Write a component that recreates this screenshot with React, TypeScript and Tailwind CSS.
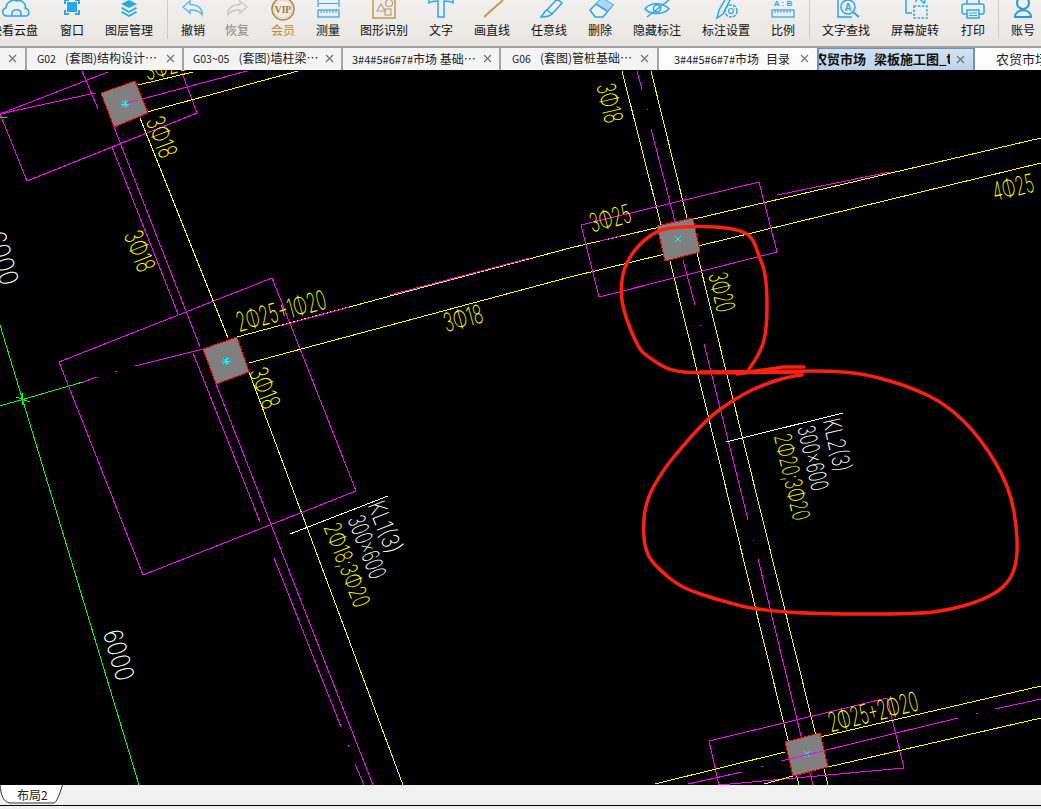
import type { ReactNode } from "react";

const BLUE = "#2aa6ea";
const GOLD = "#c39a52";

function Tool({ w, label, color, children }: { w: string; label: string; color?: string; children: ReactNode }) {
    return (
        <div className={`${w} shrink-0 flex flex-col items-center`}>
            <svg width="30" height="20" viewBox="0 0 30 20" className="overflow-visible shrink-0" fill="none" stroke={BLUE} strokeWidth="1.5">
                {children}
            </svg>
            <span className={`mt-[2px] text-[12px] leading-4 whitespace-nowrap ${color ?? "text-[#111]"}`}>{label}</span>
        </div>
    );
}

function Divider({ className }: { className?: string }) {
    return <div className={`w-px h-[39px] shrink-0 bg-[#cfccc8] ${className ?? ""}`} />;
}

function Toolbar() {
    return (
        <div className="h-[46px] shrink-0 flex overflow-hidden bg-gradient-to-b from-[#f1f0ee] to-[#e9e6e2]">
            <div className="flex ml-[-14px]">
                <Tool w="w-[56px]" label="快看云盘">
                    <path d="M8 16 C3 16 2 9 7 8 C7 2 14 -1 18 1 C22 -1 28 4 26 8 C31 9 31 16 26 16 Z" />
                    <path d="M13 16 V13 a4 3 0 0 1 9 0 V16" />
                </Tool>
                <Tool w="w-[60px]" label="窗口">
                    <rect x="10" y="2" width="10" height="10" fill={BLUE} stroke="none" />
                    <path d="M8 4 V0 H12 M18 0 H22 V4 M22 10 V14 H18 M12 14 H8 V10" strokeWidth="2" />
                </Tool>
                <Tool w="w-[54px]" label="图层管理">
                    <path d="M15 0 L23 4 L15 8 L7 4 Z" fill={BLUE} stroke="none" />
                    <path d="M8 7 L15 11 L22 7 L23 8.5 L15 13 L7 8.5 Z" fill={BLUE} stroke="none" />
                    <path d="M8 11 L15 15 L22 11 L23 12.5 L15 17 L7 12.5 Z" fill={BLUE} stroke="none" />
                </Tool>
                <Divider className="ml-[11px]" />
                <Tool w="w-[50px]" label="撤销">
                    <path d="M5 7 L12 1 V4.5 C19 4.5 25 8 24 15 C22 11 18 10 12 10 V13 Z" stroke="#62b9ea" />
                </Tool>
                <Tool w="w-[38px]" label="恢复" color="text-[#8a8a8a]">
                    <path d="M25 7 L18 1 V4.5 C11 4.5 5 8 6 15 C8 11 12 10 18 10 V13 Z" stroke="#c9c9c9" />
                </Tool>
                <Tool w="w-[54px]" label="会员" color="text-[#b98a3c]">
                    <circle cx="15" cy="9" r="11" stroke="#b5873e" />
                    <circle cx="15" cy="9" r="9" stroke="#e3cfa5" strokeWidth="1" />
                    <text x="15" y="12.5" textAnchor="middle" fontSize="9.5" fontWeight="700" fontFamily="Liberation Serif, serif" fill="#a9782d" stroke="none">
                        VIP
                    </text>
                </Tool>
                <Tool w="w-[36px]" label="测量">
                    <path d="M5 0 V7 M26 0 V7 M6 3.5 H25" strokeWidth="1.2" />
                    <rect x="5" y="10" width="21" height="7" strokeWidth="1.2" />
                    <path d="M8 10 V13 M11 10 V13 M14 10 V13 M17 10 V13 M20 10 V13 M23 10 V13" strokeWidth="1" />
                </Tool>
                <Tool w="w-[76px]" label="图形识别">
                    <path d="M4 -3 V18 H26 V-3" stroke={GOLD} />
                    <path d="M8 11 L12 4 L16 11 Z" stroke="#b7a27c" strokeWidth="1.2" />
                    <circle cx="20" cy="3" r="3.5" stroke="#b7a27c" strokeWidth="1.2" />
                    <rect x="16" y="9" width="6" height="6" stroke="#b7a27c" strokeWidth="1.2" />
                </Tool>
                <Tool w="w-[38px]" label="文字">
                    <path d="M3 -2 V3 C6 1 9 1 12 1 V17 H18 V1 C21 1 24 1 27 3 V-2" />
                </Tool>
                <Tool w="w-[64px]" label="画直线">
                    <path d="M7 17 L26 0" stroke={GOLD} strokeWidth="2" />
                </Tool>
                <Tool w="w-[50px]" label="任意线">
                    <path d="M13 10 L23 -1 L28 3 L18 14 Z" />
                    <path d="M13 10 C10 11 10 14 7 17 C12 17 16 16 18 14" />
                </Tool>
                <Tool w="w-[52px]" label="删除">
                    <path d="M5 10 L17 -2 L28 5 L18 17 H10 Z" />
                    <path d="M11 4 L22 11 L28 5 L17 -2 Z" fill="#a9d8f3" stroke="none" />
                    <path d="M11 4 L22 11" />
                </Tool>
                <Tool w="w-[62px]" label="隐藏标注">
                    <path d="M3 9 C8 2 21 2 27 9 C21 15 8 15 3 9 Z" />
                    <circle cx="15" cy="8.5" r="3.5" />
                    <path d="M5 17 L27 0" />
                </Tool>
                <Tool w="w-[76px]" label="标注设置">
                    <path d="M6 18 L8 10 L15 -2 L19 0 L12 14 Z" />
                    <circle cx="20" cy="11" r="6" strokeDasharray="3 1.2" />
                    <circle cx="20" cy="11" r="2.5" strokeWidth="1.2" />
                </Tool>
                <Tool w="w-[38px]" label="比例">
                    <text x="15" y="6" textAnchor="middle" fontSize="8" fontWeight="700" fontFamily="Liberation Sans, sans-serif" fill={BLUE} stroke="none" xmlSpace="preserve">
                        A : B
                    </text>
                    <rect x="4" y="10" width="22" height="7" strokeWidth="1.2" />
                    <path d="M7 10 V13 M10 10 V13 M13 10 V13 M16 10 V13 M19 10 V13 M22 10 V13" strokeWidth="1" />
                </Tool>
                <Divider className="ml-[7px]" />
                <Tool w="w-[72px]" label="文字查找">
                    <path d="M7 -3 V17 H21" />
                    <circle cx="17" cy="7" r="7" />
                    <path d="M22 12 L28 17" strokeWidth="2" />
                    <text x="17" y="10.5" textAnchor="middle" fontSize="10" fontWeight="700" fontFamily="Liberation Sans, sans-serif" fill={BLUE} stroke="none">
                        A
                    </text>
                </Tool>
                <Tool w="w-[66px]" label="屏幕旋转">
                    <path d="M6 -3 V13 H12 M16 -3 V2" />
                    <rect x="14" y="6" width="13" height="12" strokeDasharray="2.5 1.5" />
                    <path d="M19 -1 L25 3 M25 0 V3 H22" strokeWidth="1.2" />
                </Tool>
                <Tool w="w-[50px]" label="打印">
                    <path d="M9 4 V-2 H21 V4" />
                    <path d="M9 14 H6 Q4 14 4 12 V6 Q4 4 6 4 H24 Q26 4 26 6 V12 Q26 14 24 14 H21" />
                    <rect x="9" y="10" width="12" height="8" />
                    <path d="M11 13 H19 M11 15.5 H19" strokeWidth="1" />
                </Tool>
                <Divider />
                <Tool w="w-[48px]" label="账号">
                    <circle cx="15" cy="3" r="6" strokeWidth="2" stroke="#1f9bea" />
                    <path d="M7 17 C7 8 23 8 23 17 Z" strokeWidth="2" stroke="#1f9bea" />
                </Tool>
            </div>
        </div>
    );
}

function Close() {
    return (
        <svg width="9" height="9" viewBox="0 0 9 9" className="shrink-0" stroke="#6f6f6f" strokeWidth="1.1">
            <path d="M1 1 L8 8 M8 1 L1 8" />
        </svg>
    );
}

function Tab({ w, pl, children, closeX }: { w: string; pl: string; children?: ReactNode; closeX: string }) {
    return (
        <div className={`${w} ${pl} shrink-0 h-full flex items-center bg-[#f4f4f4] border-r-2 border-[#a4a4a4] text-[12px] leading-4 pb-[1px] text-[#222] whitespace-nowrap overflow-hidden`}>
            <div className="flex-1 overflow-hidden">{children}</div>
            <div className={closeX}>
                <Close />
            </div>
        </div>
    );
}

function Tabs() {
    return (
        <div className="h-[24px] shrink-0 flex border-t-2 border-[#a0a0a0] overflow-hidden bg-[#f4f4f4]">
            <Tab w="w-[27px]" pl="pl-0" closeX="pr-[8px]" />
            <Tab w="w-[157px]" pl="pl-[10px]" closeX="pr-[7px] pl-[2px]">
                <span className="text-[10.5px]">G02</span>
                <span className="ml-[9px]">(套图)结构设计⋯</span>
            </Tab>
            <Tab w="w-[159px]" pl="pl-[9px]" closeX="pr-[7px] pl-[2px]">
                <span className="text-[10.5px]">G03~05</span>
                <span className="ml-[9px]">(套图)墙柱梁⋯</span>
            </Tab>
            <Tab w="w-[158px]" pl="pl-[9px]" closeX="pr-[7px] pl-[2px]">
                <span className="text-[11px]">3#4#5#6#7#</span>
                <span>市场 基础⋯</span>
            </Tab>
            <Tab w="w-[158px]" pl="pl-[11px]" closeX="pr-[8px] pl-[2px]">
                <span className="text-[10.5px]">G06</span>
                <span className="ml-[9px]">(套图)管桩基础⋯</span>
            </Tab>
            <div className="w-[158px] pl-[15px] pr-[8px] pb-[1px] shrink-0 h-full flex items-center justify-between bg-[#fcfcfc] text-[12px] leading-4 text-[#222] whitespace-nowrap">
                <span>
                    <span className="text-[11px]">3#4#5#6#7#</span>市场<span className="ml-[7px]">目录</span>
                </span>
                <Close />
            </div>
            <div className="w-[158px] shrink-0 h-full flex items-center bg-gradient-to-b from-[#d4e2f1] to-[#bcd2e9] border-x-2 border-t border-[#6d93c0] text-[13px] leading-4 pb-[1px] font-bold text-[#111] whitespace-nowrap overflow-hidden pr-[8px]">
                <div className="flex-1 overflow-hidden">
                    <span className="block ml-[-5px]">
                        农贸市场<span className="ml-[8px]">梁板施工图_t</span>
                    </span>
                </div>
                <div className="pl-[6px]">
                    <Close />
                </div>
            </div>
            <div className="flex-1 h-full flex items-center pl-[21px] pb-[1px] bg-[#fcfcfc] text-[13px] leading-4 text-[#222] whitespace-nowrap overflow-hidden">
                农贸市场 梁板施工图
            </div>
        </div>
    );
}

type P = [number, number];

function L({ c, p }: { c: string; p: number[] }) {
    return <polyline points={p.join(",")} stroke={c} fill="none" strokeWidth="1" shapeRendering="crispEdges" />;
}

function Col({ p, cx, cy, thin }: { p: number[]; cx: number; cy: number; thin?: boolean }) {
    return (
        <g>
            <polygon points={p.join(",")} fill="#808080" stroke="#ff0000" strokeWidth="1" shapeRendering="crispEdges" />
            <path
                d={thin ? `M${cx - 3} ${cy - 3} L${cx + 3} ${cy + 3} M${cx + 3} ${cy - 3} L${cx - 3} ${cy + 3}` : `M${cx - 4} ${cy} H${cx + 4} M${cx} ${cy - 4} V${cy + 4} M${cx - 3} ${cy - 3} L${cx + 3} ${cy + 3} M${cx + 3} ${cy - 3} L${cx - 3} ${cy + 3}`}
                stroke="#00ffff"
                strokeWidth="1"
                shapeRendering="crispEdges"
            />
        </g>
    );
}

function T({ x, y, r, w, c, s, children }: { x: number; y: number; r: number; w: number; c: string; s?: number; children: string }) {
    return (
        <text
            transform={`translate(${x} ${y}) rotate(${r})`}
            textAnchor="middle"
            dominantBaseline="central"
            textLength={w}
            lengthAdjust="spacingAndGlyphs"
            fontFamily="Inter, Lato, sans-serif"
            fontWeight="200"
            fontSize={s ?? 26}
            fill={c}
        >
            {children}
        </text>
    );
}

// smooth line through the hand drawn points
function smooth(pts: P[]) {
    let d = `M${pts[0][0]} ${pts[0][1]}`;
    for (let i = 1; i < pts.length - 1; i++) {
        const mx = (pts[i][0] + pts[i + 1][0]) / 2;
        const my = (pts[i][1] + pts[i + 1][1]) / 2;
        d += ` Q${pts[i][0]} ${pts[i][1]} ${mx} ${my}`;
    }
    const last = pts[pts.length - 1];
    return d + ` L${last[0]} ${last[1]}`;
}

const smallLoop: P[] = [[749, 369], [758, 357], [767, 333], [767, 277], [758, 253], [752, 237], [740, 230], [713, 226], [677, 227], [658, 230], [638, 245], [625, 265], [621, 283], [622, 308], [638, 348], [648, 357], [670, 371], [698, 373], [803, 372]];
const bigLoop: P[] = [[802, 375], [790, 376], [757, 387], [733, 400], [708, 418], [682, 447], [663, 470], [645, 502], [643, 537], [648, 557], [660, 570], [680, 587], [718, 600], [757, 610], [817, 614], [917, 614], [950, 610], [983, 600], [1005, 587], [1016, 568], [1018, 537], [1010, 487], [980, 437], [947, 405], [913, 388], [870, 375], [837, 371], [800, 371], [700, 372]];

const M = "#ff00ff";
const Y = "#ffff00";
const G = "#00ff00";
const W = "#ffffff";

function Drawing() {
    return (
        <svg viewBox="0 70 1041 715" className="block flex-1 min-h-0 w-full bg-black">
            {/* axis */}
            <L c={G} p={[0, 325, 139, 785]} />
            <L c={G} p={[0, 406, 83, 382]} />
            <L c={G} p={[0, 118, 7, 117]} />
            <L c={G} p={[22, 393, 22, 405]} />
            <L c={G} p={[16, 397, 30, 402]} />
            <L c={M} p={[83, 382, 97, 377]} />

            {/* top left column */}
            <L c={M} p={[0, 114, 27, 181, 197, 113, 182, 73]} />
            <L c={M} p={[0, 114, 108, 72]} />
            <L c={M} p={[0, 114, 95, 93]} />
            <L c={M} p={[127, 103, 247, 71]} />
            <L c={M} p={[82, 71, 98, 109]} />
            <L c={Y} p={[138, 85, 193, 72]} />
            <L c={Y} p={[147, 112, 298, 71]} />
            <L c={M} p={[114, 127, 200, 347]} />
            <L c={M} p={[112, 147, 178, 314]} />
            <L c={Y} p={[140, 118, 228, 338]} />
            <L c={Y} p={[249, 372, 403, 785]} />

            {/* left column rect and stubs */}
            <L c={M} p={[272, 278, 356, 491, 143, 575, 59, 362, 272, 278]} />
            <L c={M} p={[135, 366, 203, 349]} />
            <L c={M} p={[193, 353, 260, 522]} />
            <L c={M} p={[274, 558, 341, 727]} />
            <L c={M} p={[348, 745, 349, 747]} />
            <L c={M} p={[355, 764, 364, 785]} />
            <L c={M} p={[216, 384, 373, 785]} />
            <L c={M} p={[115, 371, 117, 371]} />

            {/* long beam */}
            <L c={Y} p={[237, 337, 570, 248, 1041, 138]} />
            <L c={Y} p={[249, 363, 570, 277, 1012, 170, 1041, 163]} />
            <L c={M} p={[280, 326, 350, 307]} />
            <L c={M} p={[390, 295, 530, 258]} />
            <L c={M} p={[777, 195, 890, 172]} />
            <L c={M} p={[600, 241, 620, 236]} />

            {/* column lines on the right */}
            <L c={Y} p={[622, 71, 661, 225]} />
            <L c={Y} p={[651, 71, 687, 218]} />
            <L c={M} p={[637, 71, 642, 90]} />
            <L c={M} p={[647, 109, 648, 110]} />
            <L c={M} p={[651, 129, 675, 222]} />
            <L c={Y} p={[670, 261, 799, 785]} />
            <L c={Y} p={[697, 253, 828, 785]} />
            <L c={M} p={[683, 260, 695, 305]} />
            <L c={M} p={[700, 325, 701, 326]} />
            <L c={M} p={[704, 344, 748, 520]} />
            <L c={M} p={[753, 540, 754, 541]} />
            <L c={M} p={[758, 559, 813, 785]} />
            <L c={M} p={[581, 225, 759, 182, 777, 252, 599, 297, 581, 225]} />

            {/* bottom right */}
            <L c={M} p={[709, 741, 887, 698, 904, 768, 719, 785]} />
            <L c={M} p={[709, 741, 719, 785]} />
            <L c={Y} p={[655, 784, 785, 752]} />
            <L c={Y} p={[820, 737, 1041, 686]} />
            <L c={Y} p={[764, 784, 793, 776]} />
            <L c={Y} p={[828, 767, 1041, 718]} />
            <L c={M} p={[688, 784, 742, 772]} />
            <L c={M} p={[761, 766, 763, 766]} />
            <L c={M} p={[781, 761, 958, 718]} />
            <L c={M} p={[976, 713, 978, 713]} />
            <L c={M} p={[995, 709, 1041, 699]} />

            <Col p={[101, 93, 135, 81, 148, 113, 114, 127]} cx={125} cy={104} />
            <Col p={[203, 349, 237, 337, 249, 372, 216, 384]} cx={226} cy={361} />
            <Col p={[657, 226, 693, 218, 700, 252, 665, 261]} cx={678} cy={239} thin />
            <Col p={[785, 742, 820, 733, 828, 767, 793, 776]} cx={807} cy={754} thin />
            <L c={M} p={[781, 761, 823, 751]} />
            <L c={M} p={[127, 103, 138, 100]} />

            {/* leaders */}
            <L c={W} p={[290, 534, 388, 496]} />
            <L c={W} p={[726, 442, 843, 413]} />

            {/* labels */}
            <T x={165} y={66} r={-15} w={42} c={Y}>3Φ25</T>
            <T x={162} y={137} r={69} w={42} c={Y}>3Φ18</T>
            <T x={140} y={251} r={69} w={42} c={Y}>3Φ18</T>
            <T x={281} y={311} r={-15} w={92} c={Y} s={27}>2Φ25+1Φ20</T>
            <T x={265} y={388} r={69} w={42} c={Y}>3Φ18</T>
            <T x={463} y={318} r={-15} w={40} c={Y}>3Φ18</T>
            <T x={610} y={218} r={-15} w={42} c={Y}>3Φ25</T>
            <T x={1013} y={187} r={-13} w={42} c={Y}>4Φ25</T>
            <T x={722} y={292} r={77} w={40} c={Y}>3Φ20</T>
            <T x={610} y={103} r={77} w={40} c={Y}>3Φ18</T>
            <T x={3} y={258} r={74} w={55} c={W}>6000</T>
            <T x={119} y={655} r={74} w={52} c={W}>6000</T>
            <T x={837} y={445} r={77} w={54} c={W} s={24}>KL2(3)</T>
            <T x={813} y={458} r={77} w={66} c={W} s={24}>300x600</T>
            <T x={792} y={477} r={77} w={88} c={Y} s={24}>2Φ20;3Φ20</T>
            <T x={385} y={527} r={69} w={54} c={W} s={24}>KL1(3)</T>
            <T x={367} y={547} r={69} w={66} c={W} s={24}>300x600</T>
            <T x={347} y={565} r={69} w={88} c={Y} s={24}>2Φ18;3Φ20</T>
            <T x={873} y={712} r={-14} w={92} c={Y} s={27}>2Φ25+2Φ20</T>

            {/* red marker */}
            <path d={smooth(smallLoop)} fill="none" stroke="#ff2010" strokeWidth="3.5" strokeLinecap="round" strokeLinejoin="round" />
            <path d="M737 374 L783 367 L804 367" fill="none" stroke="#ff2010" strokeWidth="3.5" strokeLinecap="round" />
            <path d={smooth(bigLoop)} fill="none" stroke="#ff2010" strokeWidth="3.5" strokeLinecap="round" strokeLinejoin="round" />
        </svg>
    );
}

function LayoutBar() {
    return (
        <div className="shrink-0">
            <div className="h-[20px] bg-[#f0f0f0] flex">
                <div className="relative w-[64px] h-[19px] flex items-center pl-[17px] text-[12px] text-[#222]">
                    <svg width="64" height="19" viewBox="0 0 64 19" className="absolute left-0 top-0" fill="#fff" stroke="#333" strokeWidth="1">
                        <path d="M0 0 C1 10 3 17 10 18 H54 C57 17 60 8 62.5 0" />
                    </svg>
                    <span className="relative">布局2</span>
                </div>
            </div>
            <div className="h-[4px] bg-[#f0f0f0] border-t border-black" />
        </div>
    );
}

export default function App() {
    return (
        <div className="w-[1041px] h-[809px] flex flex-col overflow-hidden font-['Noto_Sans_CJK_SC',sans-serif]">
            <Toolbar />
            <Tabs />
            <Drawing />
            <LayoutBar />
        </div>
    );
}
